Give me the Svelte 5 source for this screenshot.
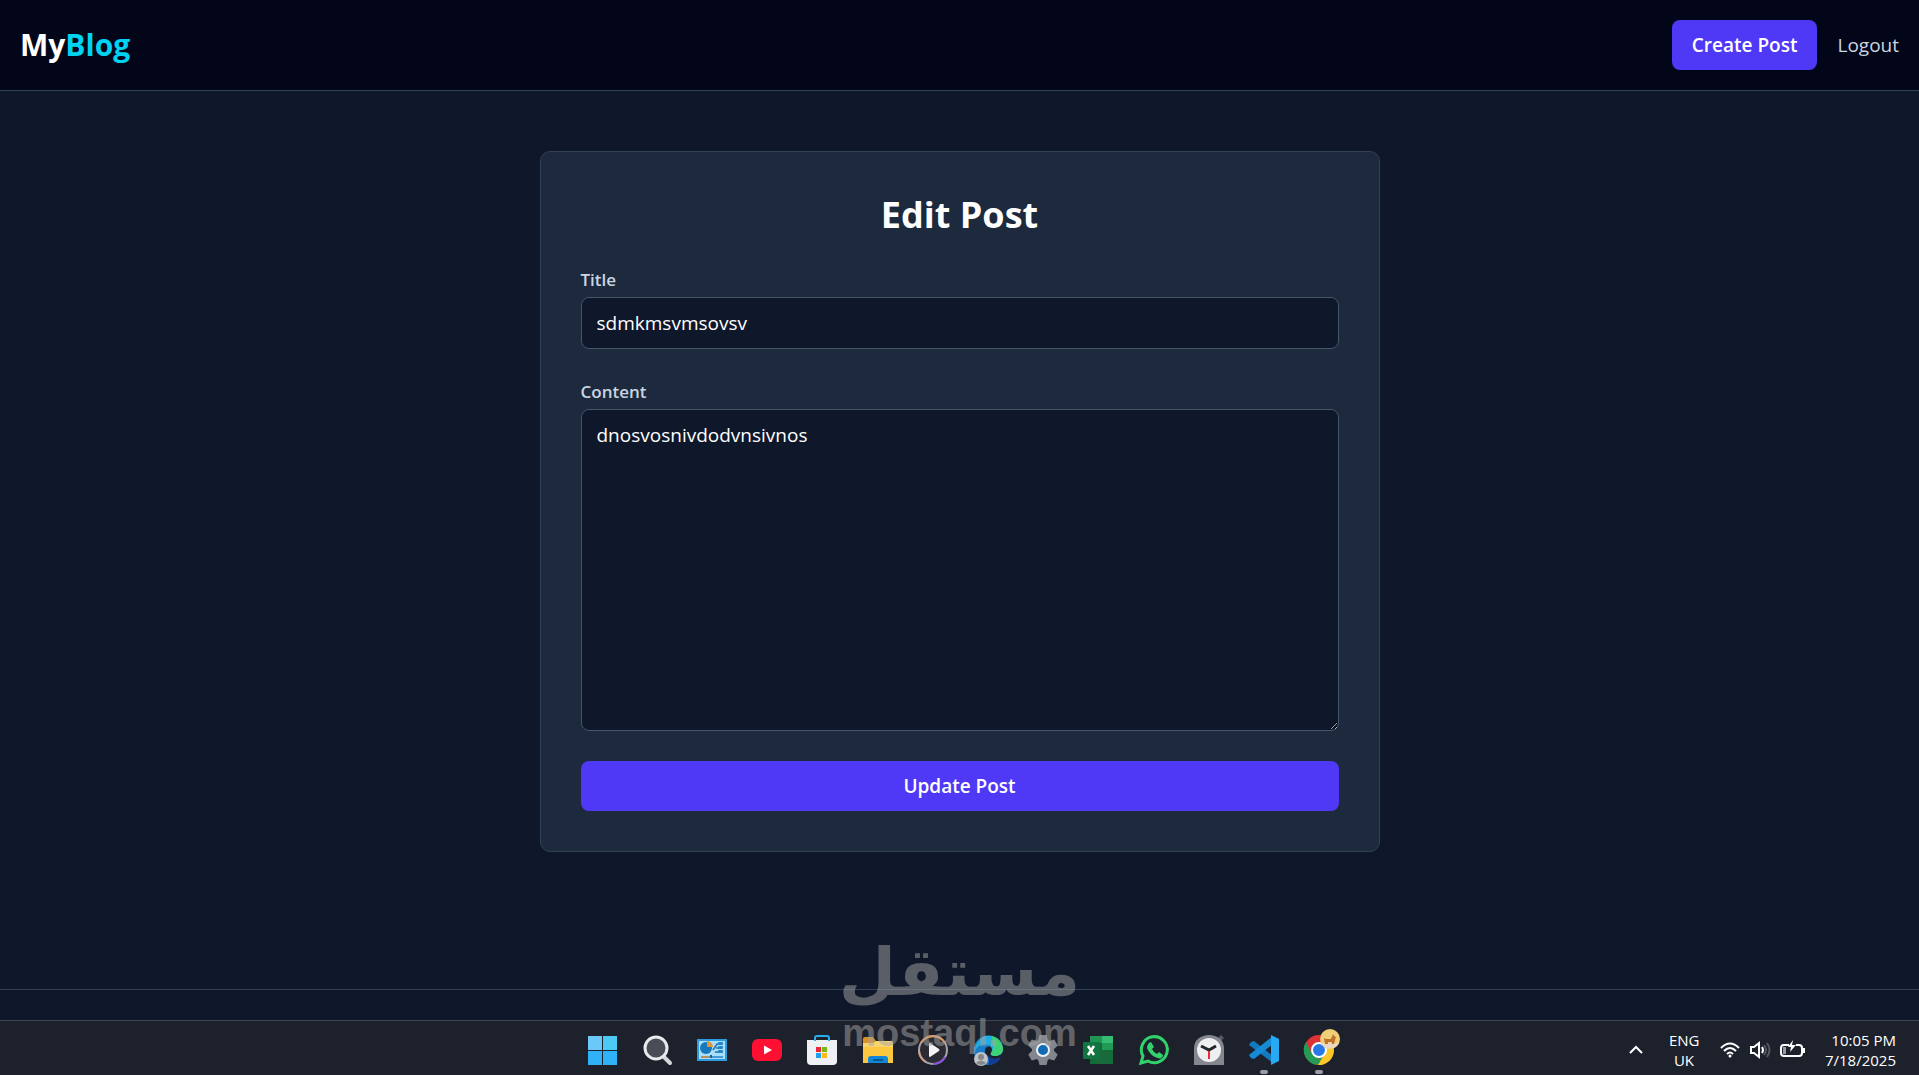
<script>
    let title = $state('sdmkmsvmsovsv');
    let content = $state('dnosvosnivdodvnsivnos');

    const apps = [
        { id: 'start', label: 'Start' },
        { id: 'search', label: 'Search' },
        { id: 'panel', label: 'Control Panel' },
        { id: 'youtube', label: 'YouTube' },
        { id: 'store', label: 'Microsoft Store' },
        { id: 'files', label: 'File Explorer' },
        { id: 'media', label: 'Media Player' },
        { id: 'edge', label: 'Edge' },
        { id: 'settings', label: 'Settings' },
        { id: 'excel', label: 'Excel' },
        { id: 'whatsapp', label: 'WhatsApp' },
        { id: 'clock', label: 'Clock' },
        { id: 'code', label: 'Visual Studio Code', running: true },
        { id: 'chrome', label: 'Chrome', running: true }
    ];

    const teeth = [0, 60, 120, 180, 240, 300];

    function handleSubmit(event) {
        event.preventDefault();
    }
</script>

<div class="desktop">
    <div class="page">
        <nav class="navbar">
            <a class="logo" href="/">My<span>Blog</span></a>
            <div class="nav-links">
                <a class="btn" href="/create">Create Post</a>
                <button class="logout" type="button">Logout</button>
            </div>
        </nav>

        <main>
            <form class="card" onsubmit={handleSubmit}>
                <h1>Edit Post</h1>
                <div class="field">
                    <label for="title">Title</label>
                    <input id="title" type="text" bind:value={title} />
                </div>
                <div class="field">
                    <label for="content">Content</label>
                    <textarea id="content" rows="10" spellcheck="false" bind:value={content}></textarea>
                </div>
                <button class="btn submit" type="submit">Update Post</button>
            </form>
        </main>

        <footer></footer>
    </div>

    <div class="taskbar">
        <div class="apps">
            {#each apps as app (app.id)}
                <button class="app" class:running={app.running} type="button" aria-label={app.label}>
                    <svg viewBox="0 0 32 32" aria-hidden="true">
                        {#if app.id === 'start'}
                            <path fill="#6cc8f8" d="M2 2h14v14H2z" />
                            <path fill="#4cc9f4" d="M17 2h14v14H17z" />
                            <path fill="#2fb3f6" d="M2 17h14v14H2zM17 17h14v14H17z" />
                        {:else if app.id === 'search'}
                            <path d="M21 21l8 8" stroke="#d4d6da" stroke-width="4" stroke-linecap="round" />
                            <circle cx="15" cy="14" r="11" fill="#4a4d57" stroke="#e9eaee" stroke-width="3" />
                        {:else if app.id === 'panel'}
                            <rect x="1" y="5" width="30" height="22" fill="#2c9be0" />
                            <rect x="3" y="7" width="26" height="18" fill="#a9defa" />
                            <circle cx="10" cy="14" r="6" fill="#1878bd" />
                            <path d="M11 13V7a6 6 0 0 1 6 6z" fill="#dd963a" />
                            <path d="M17 16l4-6h3M20 14h4M19 18h5" fill="none" stroke="#2372a8" stroke-width="1.500" />
                            <rect x="22" y="8" width="5" height="3" rx="1" fill="#2385ca" />
                            <rect x="22" y="12" width="5" height="3" rx="1" fill="#2385ca" />
                            <rect x="22" y="16" width="5" height="3" rx="1" fill="#2385ca" />
                            <path d="M5 23h22" stroke="#2385ca" stroke-width="1.500" />
                            <path d="M5 23h9" stroke="#d69038" stroke-width="1.500" />
                            <path d="M15 21v3" stroke="#17629c" stroke-width="2" />
                        {:else if app.id === 'youtube'}
                            <rect x="1" y="5" width="30" height="22" rx="6" fill="#ff1032" />
                            <path d="M13 11.500l8 4.500-8 4.500z" fill="#fff" />
                        {:else if app.id === 'store'}
                            <path d="M1 6h30v21q0 4-4 4H5q-4 0-4-4z" fill="#eef0f3" />
                            <path d="M23 7V4q0-2-2-2H11q-2 0-2 2v3" fill="none" stroke="#28aef0" stroke-width="2" />
                            <path d="M10 13h5v5h-5z" fill="#e8253a" />
                            <path d="M16 13h5v5h-5z" fill="#7cb90e" />
                            <path d="M10 19h5v5h-5z" fill="#21a0e5" />
                            <path d="M16 19h5v5h-5z" fill="#fbb91c" />
                        {:else if app.id === 'files'}
                            <path d="M1 5q0-2 2-2h8l3 4h14v8H1z" fill="#d99521" />
                            <path d="M1 9h10l4-2h14q2 0 2 2v20H1z" fill="#fdc83d" />
                            <path d="M1 9h10l4-2h14q2 0 2 2v4H1z" fill="#f9d570" />
                            <path d="M6 29v-4q0-3 3-3h14q3 0 3 3v4z" fill="#1486d8" />
                            <path d="M11 26h10" stroke="#075795" stroke-width="2" />
                        {:else if app.id === 'media'}
                            <circle cx="16" cy="16" r="14" fill="#2b2c33" stroke="#a9a3ac" stroke-width="2" />
                            <path d="M4 9a14 14 0 0 1 24 0" fill="none" stroke="#dc985e" stroke-width="2" />
                            <path d="M2 17a14 14 0 0 0 7 11" fill="none" stroke="#d59c86" stroke-width="2" />
                            <path d="M16 30a14 14 0 0 0 12-7" fill="none" stroke="#8752dd" stroke-width="2" />
                            <path d="M12 10q0-1 1-1l9 6q1 1 0 2l-9 6q-1 0-1-1z" fill="#f4f4f5" />
                        {:else if app.id === 'edge'}
                            <path d="M2 17A14.500 14.500 0 0 1 31 15c0 5-4 7-8 7-3 0-5-1-4-3 3-5-1-8-5-8-6 0-11 4-12 10z" fill="#20aee5" />
                            <path d="M20 2c7 2 11 7 11 13 0 5-4 7-8 7-3 0-5-1-4-3 4-5 1-9 1-17z" fill="#3ed177" />
                            <path d="M12 3c-6 2-10 7-10 14 0 8 6 14 14 14 5 0 10-3 12-7-8 3-16-1-15-8 0-3 3-4 5-3-2-3-7-4-11-1-3 2-5 5-5 9 0-9 4-15 10-18z" fill="#167dca" />
                            <path d="M15 19c2 6 8 7 14 4-2 5-7 8-13 8 2-4 0-7-1-12z" fill="#123d92" />
                            <circle cx="9" cy="25" r="7" fill="#c2c3c5" />
                            <circle cx="9" cy="23" r="3" fill="#85878b" />
                            <path d="M4 29q5-5 10 0-5 4-10 0z" fill="#85878b" />
                        {:else if app.id === 'settings'}
                            {#each teeth as angle}
                                <path d="M12.500 1h7l2 8h-11z" fill="#83868e" transform="rotate({angle} 16 16)" />
                            {/each}
                            <circle cx="16" cy="16" r="11" fill="#83868e" />
                            <circle cx="16" cy="16" r="6" fill="#1269b4" stroke="#eff1f3" stroke-width="2" />
                        {:else if app.id === 'excel'}
                            <path d="M8 2h23v28H8z" fill="#176b3b" />
                            <path d="M8 2h12v7H8z" fill="#219453" />
                            <path d="M20 2h11v7H20z" fill="#34bd72" />
                            <path d="M20 9h11v7H20z" fill="#219a55" />
                            <rect x="1" y="8" width="17" height="17" rx="1" fill="#107540" />
                            <path d="M6 12l6 9M12 12l-6 9" stroke="#fff" stroke-width="2.500" />
                        {:else if app.id === 'whatsapp'}
                            <path d="M3 29l2-7a13 13 0 1 1 5 5z" fill="none" stroke="#32d16c" stroke-width="3" />
                            <path d="M11 9l2-1 3 5-2 2q2 4 5 5l2-2 4 3c0 3-3 4-5 3-5-1-9-5-11-10 0-2 1-4 2-5z" fill="#32d16c" />
                        {:else if app.id === 'clock'}
                            <path d="M25 4l3-3 3 3-3 3z" fill="#555962" />
                            <path d="M1 31V14C1 6 8 1 16 1s15 5 15 13v17z" fill="#858790" />
                            <circle cx="16" cy="16" r="12" fill="#eeeff0" />
                            <path d="M8 12l8 4 7-4" fill="none" stroke="#22252b" stroke-width="3" />
                            <path d="M16 17v8" stroke="#ec2c35" stroke-width="2" />
                        {:else if app.id === 'code'}
                            <path d="M3 8l3-1 19 15v7L1 11z" fill="#127ac1" />
                            <path d="M3 24l3 1L25 10V2L1 21z" fill="#168bd5" />
                            <path d="M23 1l8 4v22l-8 4z" fill="#28a9f3" />
                        {:else}
                            <circle cx="16" cy="16" r="15" fill="#df3036" />
                            <path d="M3 8a15 15 0 0 0 12 23l6-11-5-4-7 4z" fill="#249c55" />
                            <path d="M31 16a15 15 0 0 1-16 15l7-12V10h8z" fill="#f9c827" />
                            <circle cx="16" cy="16" r="7" fill="#2879e8" stroke="#fff" stroke-width="2" />
                            <circle cx="27" cy="5" r="10" fill="#f2ce77" />
                            <path d="M18 9a10 10 0 0 0 18 0z" fill="#ead9c2" />
                            <path d="M21 4l2 1h5l2-5 1 2 2 1-1 3-1 4h-2v-2h-4v2h-3z" fill="#bd712b" />
                        {/if}
                    </svg>
                </button>
            {/each}
        </div>

        <div class="tray">
            <button class="chevron" type="button" aria-label="Show hidden icons">
                <svg viewBox="0 0 16 16"><path d="M2 11l6-6 6 6" /></svg>
            </button>
            <div class="lang">ENG<br />UK</div>
            <div class="status">
                <svg class="wifi" viewBox="0 0 22 20" aria-hidden="true">
                    <path d="M2 8q9-9 18 0M5 11q6-6 12 0M8 14q3-3 6 0" />
                    <circle cx="11" cy="16" r="1.500" fill="#fff" stroke="none" />
                </svg>
                <svg class="volume" viewBox="0 0 22 20" aria-hidden="true">
                    <path d="M2 7h3l5-4v14l-5-4H2z" />
                    <path d="M13 7q2 3 0 6" />
                    <path d="M15 5q4 5 0 10M18 3q5 7 0 14" stroke="#555861" />
                </svg>
                <svg class="battery" viewBox="0 0 28 20" aria-hidden="true">
                    <path d="M10 5H5Q2 5 2 8v5q0 3 3 3h15q3 0 3-3V8q0-3-3-3h-3M25 8v5" />
                    <path d="M4 7h3v7H4z" fill="#969aa1" stroke="none" />
                    <path d="M14 0l-5 7h3l-1 5 6-7h-4z" fill="#fff" stroke="none" />
                </svg>
            </div>
            <div class="datetime">10:05 PM<br />7/18/2025</div>
        </div>
    </div>

    <div class="watermark">
        <div class="watermark-name" lang="ar" dir="rtl">مستقل</div>
        <div class="watermark-url">mostaql.com</div>
    </div>
</div>

<style>
    :global(body) {
        margin: 0;
        background: #0f172b;
    }

    .desktop,
    .desktop * {
        box-sizing: border-box;
    }

    .desktop {
        position: relative;
        display: flex;
        flex-direction: column;
        min-height: 100vh;
        font-family: 'Open Sans', 'Noto Sans', sans-serif;
        font-size: 19px;
        line-height: 30px;
        color: #fff;
    }

    button,
    input,
    textarea {
        font: inherit;
        color: inherit;
    }

    button {
        margin: 0;
        padding: 0;
        border: 0;
        background: none;
        cursor: pointer;
    }

    .page {
        flex: 1;
        display: flex;
        flex-direction: column;
        background: #0f172b;
    }

    .navbar {
        display: flex;
        justify-content: space-between;
        align-items: center;
        padding: 20px;
        background: #020618;
        border-bottom: 1px solid #314158;
    }

    .logo {
        font-size: 30px;
        font-weight: 700;
        line-height: 42px;
        color: #fff;
        text-decoration: none;
    }

    .logo span {
        color: #00d3f2;
    }

    .nav-links {
        display: flex;
        align-items: center;
        gap: 20px;
    }

    .btn {
        padding: 10px 20px;
        border-radius: 8px;
        background: #4f39f6;
        color: #fff;
        font-weight: 600;
        text-align: center;
        text-decoration: none;
    }

    .logout {
        color: #cad5e2;
    }

    main {
        padding: 60px 20px;
    }

    .card {
        display: flex;
        flex-direction: column;
        gap: 30px;
        max-width: 840px;
        margin: 0 auto;
        padding: 40px;
        background: #1d293d;
        border: 1px solid #314158;
        border-radius: 10px;
    }

    h1 {
        margin: 0;
        font-size: 36px;
        font-weight: 700;
        line-height: 45px;
        text-align: center;
    }

    .field {
        display: flex;
        flex-direction: column;
        gap: 5px;
    }

    label {
        font-size: 17px;
        font-weight: 600;
        line-height: 25px;
        color: #cad5e2;
    }

    input,
    textarea {
        display: block;
        width: 100%;
        margin: 0;
        padding: 10px 15px;
        background: #0f172b;
        border: 1px solid #45556c;
        border-radius: 8px;
        outline: none;
    }

    input {
        height: 52px;
    }

    textarea {
        resize: vertical;
    }

    footer {
        margin-top: auto;
        padding: 15px;
        border-top: 1px solid #314158;
    }

    .taskbar {
        display: grid;
        grid-template-columns: 1fr 750px 1fr;
        align-items: center;
        height: 55px;
        padding-left: 2px;
        background: #1d212c;
        border-top: 1px solid #43464e;
    }

    .apps {
        grid-column: 2;
        display: flex;
        justify-content: space-between;
        height: 100%;
    }

    .app {
        position: relative;
        width: 32px;
        padding-top: 3px;
    }

    .app svg {
        display: block;
        width: 32px;
        height: 32px;
        margin: auto;
        overflow: visible;
    }

    .running::after {
        content: '';
        position: absolute;
        bottom: 1px;
        left: 12px;
        width: 8px;
        height: 4px;
        border-radius: 2px;
        background: #9b9da2;
    }

    .tray {
        display: flex;
        justify-content: flex-end;
        align-items: center;
        padding: 3px 23px 0 0;
        font-size: 15px;
        line-height: 20px;
    }

    .tray svg {
        display: block;
        fill: none;
        stroke: #fff;
        stroke-width: 2;
    }

    .chevron {
        margin-right: 25px;
    }

    .chevron svg {
        width: 16px;
        height: 16px;
    }

    .lang {
        width: 30px;
        text-align: center;
    }

    .status {
        display: flex;
        align-items: center;
        gap: 8px;
        margin: 0 18px 0 20px;
    }

    .status svg {
        width: 22px;
        height: 20px;
    }

    .status .battery {
        width: 28px;
    }

    .datetime {
        text-align: right;
    }

    .watermark {
        position: absolute;
        left: 50%;
        bottom: 20px;
        transform: translateX(-50%);
        text-align: center;
        color: #a4a4a4;
        opacity: 0.5;
        pointer-events: none;
    }

    .watermark-name {
        font-family: 'DejaVu Sans', sans-serif;
        font-size: 66px;
        font-weight: 700;
        line-height: 76px;
    }

    .watermark-url {
        font-family: 'Liberation Sans', sans-serif;
        font-size: 38px;
        font-weight: 700;
        line-height: 44px;
    }
</style>
